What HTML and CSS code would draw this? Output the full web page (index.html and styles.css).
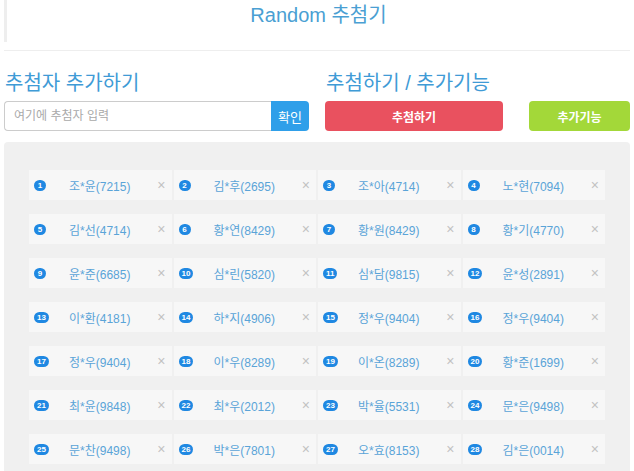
FILE: index.html
```html
<!DOCTYPE html>
<html lang="ko">
<head>
<meta charset="utf-8">
<title>Random 추첨기</title>
<link rel="stylesheet" href="styles.css">
</head>
<body>
<div class="page">
  <header class="header">
    <h1 class="title">Random 추첨기</h1>
  </header>
  <div class="divider"></div>
  <section class="controls">
    <div class="col">
      <h2 class="heading">추첨자 추가하기</h2>
      <div class="input-group">
        <input class="name-input" type="text" placeholder="여기에 추첨자 입력">
        <button class="btn-confirm">확인</button>
      </div>
    </div>
    <div class="col">
      <h2 class="heading">추첨하기 / 추가기능</h2>
      <div class="actions">
        <button class="btn btn-draw">추첨하기</button>
        <button class="btn btn-extra">추가기능</button>
      </div>
    </div>
  </section>
  <section class="panel">
    <div class="card"><span class="badge">1</span><span class="name">조*윤(7215)</span><span class="close">×</span></div>
    <div class="card"><span class="badge">2</span><span class="name">김*후(2695)</span><span class="close">×</span></div>
    <div class="card"><span class="badge">3</span><span class="name">조*아(4714)</span><span class="close">×</span></div>
    <div class="card"><span class="badge">4</span><span class="name">노*현(7094)</span><span class="close">×</span></div>
    <div class="card"><span class="badge">5</span><span class="name">김*선(4714)</span><span class="close">×</span></div>
    <div class="card"><span class="badge">6</span><span class="name">황*연(8429)</span><span class="close">×</span></div>
    <div class="card"><span class="badge">7</span><span class="name">황*원(8429)</span><span class="close">×</span></div>
    <div class="card"><span class="badge">8</span><span class="name">황*기(4770)</span><span class="close">×</span></div>
    <div class="card"><span class="badge">9</span><span class="name">윤*준(6685)</span><span class="close">×</span></div>
    <div class="card"><span class="badge">10</span><span class="name">심*린(5820)</span><span class="close">×</span></div>
    <div class="card"><span class="badge">11</span><span class="name">심*담(9815)</span><span class="close">×</span></div>
    <div class="card"><span class="badge">12</span><span class="name">윤*성(2891)</span><span class="close">×</span></div>
    <div class="card"><span class="badge">13</span><span class="name">이*환(4181)</span><span class="close">×</span></div>
    <div class="card"><span class="badge">14</span><span class="name">하*지(4906)</span><span class="close">×</span></div>
    <div class="card"><span class="badge">15</span><span class="name">정*우(9404)</span><span class="close">×</span></div>
    <div class="card"><span class="badge">16</span><span class="name">정*우(9404)</span><span class="close">×</span></div>
    <div class="card"><span class="badge">17</span><span class="name">정*우(9404)</span><span class="close">×</span></div>
    <div class="card"><span class="badge">18</span><span class="name">이*우(8289)</span><span class="close">×</span></div>
    <div class="card"><span class="badge">19</span><span class="name">이*온(8289)</span><span class="close">×</span></div>
    <div class="card"><span class="badge">20</span><span class="name">황*준(1699)</span><span class="close">×</span></div>
    <div class="card"><span class="badge">21</span><span class="name">최*윤(9848)</span><span class="close">×</span></div>
    <div class="card"><span class="badge">22</span><span class="name">최*우(2012)</span><span class="close">×</span></div>
    <div class="card"><span class="badge">23</span><span class="name">박*율(5531)</span><span class="close">×</span></div>
    <div class="card"><span class="badge">24</span><span class="name">문*은(9498)</span><span class="close">×</span></div>
    <div class="card"><span class="badge">25</span><span class="name">문*찬(9498)</span><span class="close">×</span></div>
    <div class="card"><span class="badge">26</span><span class="name">박*은(7801)</span><span class="close">×</span></div>
    <div class="card"><span class="badge">27</span><span class="name">오*효(8153)</span><span class="close">×</span></div>
    <div class="card"><span class="badge">28</span><span class="name">김*은(0014)</span><span class="close">×</span></div>
  </section>
</div>
</body>
</html>
```

FILE: styles.css
```css
* { box-sizing: border-box; }

body {
  margin: 0;
  background: #ffffff;
  font-family: "Liberation Sans", "Noto Sans CJK KR", sans-serif;
}

.page {
  padding: 0 4px;
}

.header {
  height: 42px;
  border-left: 3px solid #eeeeee;
}

.title {
  margin: 0;
  font-size: 20px;
  font-weight: normal;
  line-height: 30px;
  text-align: center;
  color: #4a9fd3;
}

.divider {
  margin-top: 8px;
  height: 1px;
  background: #eeeeee;
}

.controls {
  display: grid;
  grid-template-columns: 305px 305px;
  column-gap: 16px;
  padding-top: 20px;
}

.heading {
  margin: 0 0 6px 1px;
  font-size: 20px;
  font-weight: normal;
  line-height: 24px;
  color: #3f9bd6;
}

.input-group {
  display: flex;
  height: 30px;
}

.name-input {
  flex: 1;
  min-width: 0;
  height: 30px;
  border: 1px solid #cccccc;
  border-right: none;
  border-radius: 4px 0 0 4px;
  padding: 0 9px;
  font-family: "Liberation Sans", "Noto Sans CJK KR", sans-serif;
  font-size: 12px;
  color: #555;
  outline: none;
}

.name-input::placeholder {
  color: #a9a9a9;
}

.btn-confirm {
  width: 38px;
  height: 30px;
  border: none;
  border-radius: 0 4px 4px 0;
  background: #2f9fe9;
  color: #ffffff;
  font-family: "Liberation Sans", "Noto Sans CJK KR", sans-serif;
  font-size: 13px;
  padding: 0;
}

.actions {
  display: flex;
  justify-content: space-between;
  height: 30px;
}

.btn {
  height: 30px;
  border: none;
  border-radius: 4px;
  color: #ffffff;
  font-family: "Liberation Sans", "Noto Sans CJK KR", sans-serif;
  font-size: 12px;
  font-weight: bold;
  padding: 0;
}

.btn-draw {
  width: 178px;
  background: #e9515f;
}

.btn-extra {
  width: 101px;
  background: #a3d839;
}

.panel {
  margin-top: 11px;
  background: #f0f0f0;
  border-radius: 4px;
  padding: 28px 25px;
  display: grid;
  grid-template-columns: repeat(4, 1fr);
  grid-auto-rows: 30px;
  column-gap: 2px;
  row-gap: 14px;
}

.card {
  display: grid;
  grid-template-columns: 1fr auto 1fr;
  align-items: center;
  background: #f7f7f7;
  padding: 0 6px 0 5px;
}

.badge {
  justify-self: start;
  min-width: 12px;
  height: 11px;
  padding: 0 3px;
  border-radius: 6px;
  background: #1f88e2;
  color: #ffffff;
  font-size: 8px;
  font-weight: bold;
  line-height: 11px;
  text-align: center;
}

.name {
  font-size: 12px;
  color: #5aa4d8;
  white-space: nowrap;
}

.close {
  justify-self: end;
  font-size: 14px;
  line-height: 14px;
  color: #c2c2c2;
}
```
